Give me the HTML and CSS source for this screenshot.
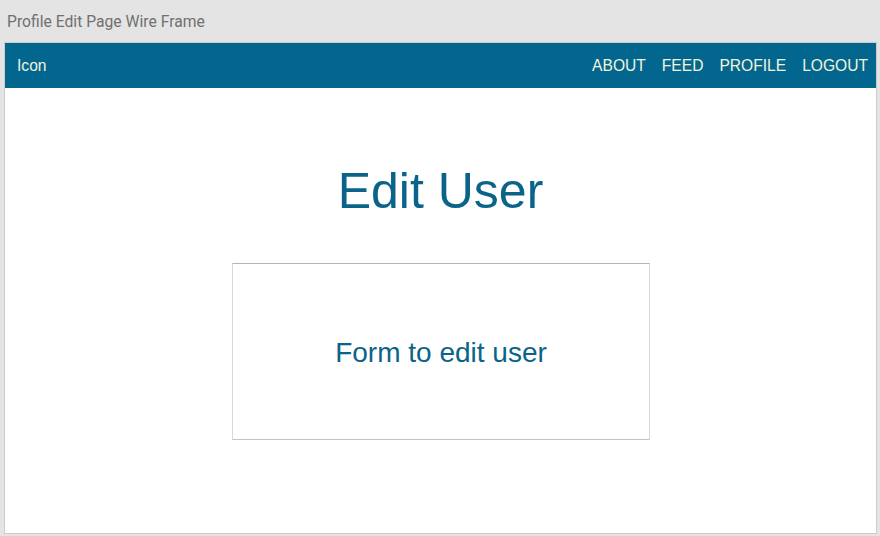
FILE: index.html
```html
<!DOCTYPE html>
<html>
<head>
<meta charset="utf-8">
<link rel="stylesheet" href="styles.css">
</head>
<body>
<div class="caption">Profile Edit Page Wire Frame</div>
<div class="frame">
  <nav class="nav">
    <span class="brand">Icon</span>
    <div class="links">
      <span>ABOUT</span>
      <span>FEED</span>
      <span>PROFILE</span>
      <span>LOGOUT</span>
    </div>
  </nav>
  <main class="content">
    <h1 class="title">Edit User</h1>
    <div class="form-box">Form to edit user</div>
  </main>
</div>
</body>
</html>
```
FILE: styles.css
```css
html, body {
  margin: 0;
  padding: 0;
  background: #e4e4e4;
  width: 880px;
  height: 536px;
  overflow: hidden;
}
.caption {
  height: 42px;
  line-height: 44px;
  padding-left: 7px;
  font-family: Roboto, "Liberation Sans", sans-serif;
  font-size: 15.7px;
  color: #707070;
}
.frame {
  margin: 0 3px 0 4px;
  background: #fff;
  border: 1px solid #cdcdcd;
  box-sizing: border-box;
  height: 492px;
}
.nav {
  height: 45px;
  background: #03668f;
  display: flex;
  align-items: center;
  justify-content: space-between;
  padding: 0 8px 0 12px;
  font-family: "Liberation Sans", Arial, sans-serif;
  font-size: 15.6px;
  color: #f3f3dc;
}
.links {
  display: flex;
  gap: 16px;
}
.content {
  display: flex;
  flex-direction: column;
  align-items: center;
  font-family: "Liberation Sans", Arial, sans-serif;
  color: #0a6489;
}
.title {
  margin: 78px 0 0 0;
  font-size: 50px;
  line-height: 50px;
  font-weight: normal;
}
.form-box {
  margin-top: 47px;
  margin-left: 1px;
  width: 418px;
  height: 177px;
  box-sizing: border-box;
  border: 1px solid #d8d8d8;
  border-top-color: #b4b4b4;
  border-bottom-color: #c4c4c4;
  display: flex;
  align-items: center;
  justify-content: center;
  font-size: 28px;
  padding-top: 3px;
}
```
